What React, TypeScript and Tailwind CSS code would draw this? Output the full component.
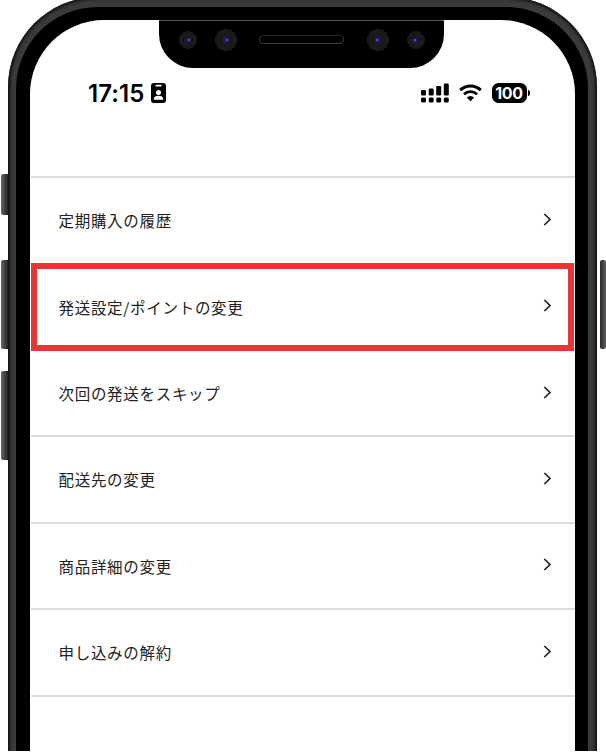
import React from 'react';
import clsx from 'clsx';

const menuItems = [
  { id: 'history', label: '定期購入の履歴' },
  { id: 'shipping', label: '発送設定/ポイントの変更', highlighted: true },
  { id: 'skip', label: '次回の発送をスキップ' },
  { id: 'address', label: '配送先の変更' },
  { id: 'products', label: '商品詳細の変更' },
  { id: 'cancel', label: '申し込みの解約' },
];

const Camera = ({ large, flip }: { large?: boolean; flip?: boolean }) => (
  <div
    className={clsx(
      'flex shrink-0 items-center justify-center rounded-full bg-[#1a1a1a]',
      large ? 'size-[22px]' : 'size-[18px]',
    )}
  >
    <div
      className={clsx(
        'flex items-center justify-center rounded-full bg-[#201873]',
        large ? 'size-[6px]' : 'size-[5px]',
        flip ? 'pr-[2px]' : 'pl-[2px]',
      )}
    >
      <div className="size-[2px] rounded-full bg-[#7468c8]" />
    </div>
  </div>
);

const Notch = () => (
  <div className="mx-auto h-[48px] w-[285px] rounded-b-[34px] bg-black">
    <div className="h-px bg-[#555]" />
    <div className="flex h-[38px] items-center pl-[19.5px] pr-[19.5px]">
      <Camera />
      <div className="ml-[18px]">
        <Camera large />
      </div>
      <div className="mx-auto mt-[-2px] h-[9px] w-[85px] rounded-full border border-[#3a3a3a] border-t-[#242424]" />
      <div className="mr-[18px]">
        <Camera large flip />
      </div>
      <Camera flip />
    </div>
  </div>
);

const BadgeIcon = () => (
  <svg width="15" height="20" viewBox="0 0 15 20">
    <rect width="15" height="20" rx="3" fill="#000" />
    <rect x="4.3" y="1.8" width="6.4" height="1.7" rx="0.8" fill="#fff" />
    <circle cx="7.5" cy="9.4" r="2.5" fill="#fff" />
    <path d="M2.8 16.8v-.8c0-2 2-3.2 4.7-3.2s4.7 1.2 4.7 3.2v.8z" fill="#fff" />
  </svg>
);

const SignalIcon = () => (
  <svg width="28" height="20" viewBox="0 0 28 20">
    <rect x="0" y="7" width="5" height="5.5" rx="1.3" />
    <rect x="7.7" y="5.5" width="5" height="7" rx="1.3" />
    <rect x="15.2" y="3" width="5" height="9.5" rx="1.3" />
    <rect x="22.8" y="0.5" width="5" height="12" rx="1.3" />
    <rect x="0" y="14.5" width="5" height="5" rx="1.5" />
    <rect x="7.7" y="14.5" width="5" height="5" rx="1.5" />
    <rect x="15.2" y="14.5" width="5" height="5" rx="1.5" />
    <rect x="22.8" y="14.5" width="5" height="5" rx="1.5" />
  </svg>
);

const WifiIcon = () => (
  <svg width="23" height="18" viewBox="0 0 23 18">
    <path d="M1.2 6.1a14.7 14.7 0 0 1 20.6 0" fill="none" stroke="#000" strokeWidth="3" />
    <path d="M5 10.2a9.4 9.4 0 0 1 13 0" fill="none" stroke="#000" strokeWidth="2.8" />
    <path d="M11.5 17.2l-3.7-3.7a5.3 5.3 0 0 1 7.4 0z" />
  </svg>
);

const StatusBar = () => (
  <div className="flex h-[50px] items-center pl-[58px] pr-[45.5px] font-['Inter',sans-serif]">
    <span className="w-[63px] pt-px text-[24px] font-semibold leading-none tracking-[0.1px] text-black">17:15</span>
    <BadgeIcon />
    <div className="ml-auto flex items-center">
      <SignalIcon />
      <div className="ml-[10px]">
        <WifiIcon />
      </div>
      <div className="ml-[10px] flex h-[20px] w-[35px] items-center justify-center rounded-[6.5px] bg-black text-[16px] font-bold leading-none tracking-[-0.3px] text-white">
        100
      </div>
      <div className="ml-px h-[6px] w-[2px] rounded-r-full bg-black" />
    </div>
  </div>
);

const MenuRow = ({ label, highlighted }: { label: string; highlighted?: boolean }) => (
  <li className="relative flex h-[86.4px] items-center justify-between border-t-2 border-[#dcdcdc] pl-[27.5px] pr-[23px]">
    <span className="pt-px text-[15.5px] leading-none tracking-[0.7px] text-[#222]">{label}</span>
    <svg width="9" height="13" viewBox="0 0 9 13" className="mb-[2px]">
      <path d="M1.3 1l5.7 5.5-5.7 5.5" fill="none" stroke="#222" strokeWidth="1.7" />
    </svg>
    {highlighted && (
      <div className="absolute -top-[1.5px] left-0 z-10 h-[88px] w-[543px] border-[6px] border-[#e93535]" />
    )}
  </li>
);

const App = () => {
  return (
    <div className="flex h-[751px] w-[606px] overflow-hidden bg-white">
      <div className="flex w-[8px] shrink-0 flex-col pl-px pt-[174px]">
        <div className="h-[41px] rounded-l-[2px] bg-linear-to-r from-[#6b6b6b] to-[#222]" />
        <div className="mt-[45px] h-[89px] rounded-l-[2px] bg-linear-to-r from-[#6b6b6b] to-[#222]" />
        <div className="mt-[22px] h-[89px] rounded-l-[2px] bg-linear-to-r from-[#6b6b6b] to-[#222]" />
      </div>

      <div className="-mt-[3px] h-[860px] w-[589px] shrink-0 rounded-t-[90px] bg-[#3a3a3a] pl-[8px] pr-[9px] pt-[10px] shadow-[inset_0_0_3px_2px_#111]">
        <div className="h-full rounded-t-[82px] bg-black pl-[14px] pr-[13px] pt-[13px]">
          <div className="h-full overflow-hidden rounded-t-[74px] bg-white font-['Noto_Sans_CJK_JP',sans-serif]">
            <div className="-ml-[2px]">
              <Notch />
            </div>
            <StatusBar />
            <ul className="ml-px mt-[58.2px] border-b-2 border-[#dcdcdc]">
              {menuItems.map((item) => (
                <MenuRow key={item.id} label={item.label} highlighted={item.highlighted} />
              ))}
            </ul>
          </div>
        </div>
      </div>

      <div className="w-[9px] shrink-0 pl-[3px] pt-[260px]">
        <div className="h-[89px] rounded-[2px] bg-linear-to-r from-[#2b2b2b] to-[#606060]" />
      </div>
    </div>
  );
};

export default App;
